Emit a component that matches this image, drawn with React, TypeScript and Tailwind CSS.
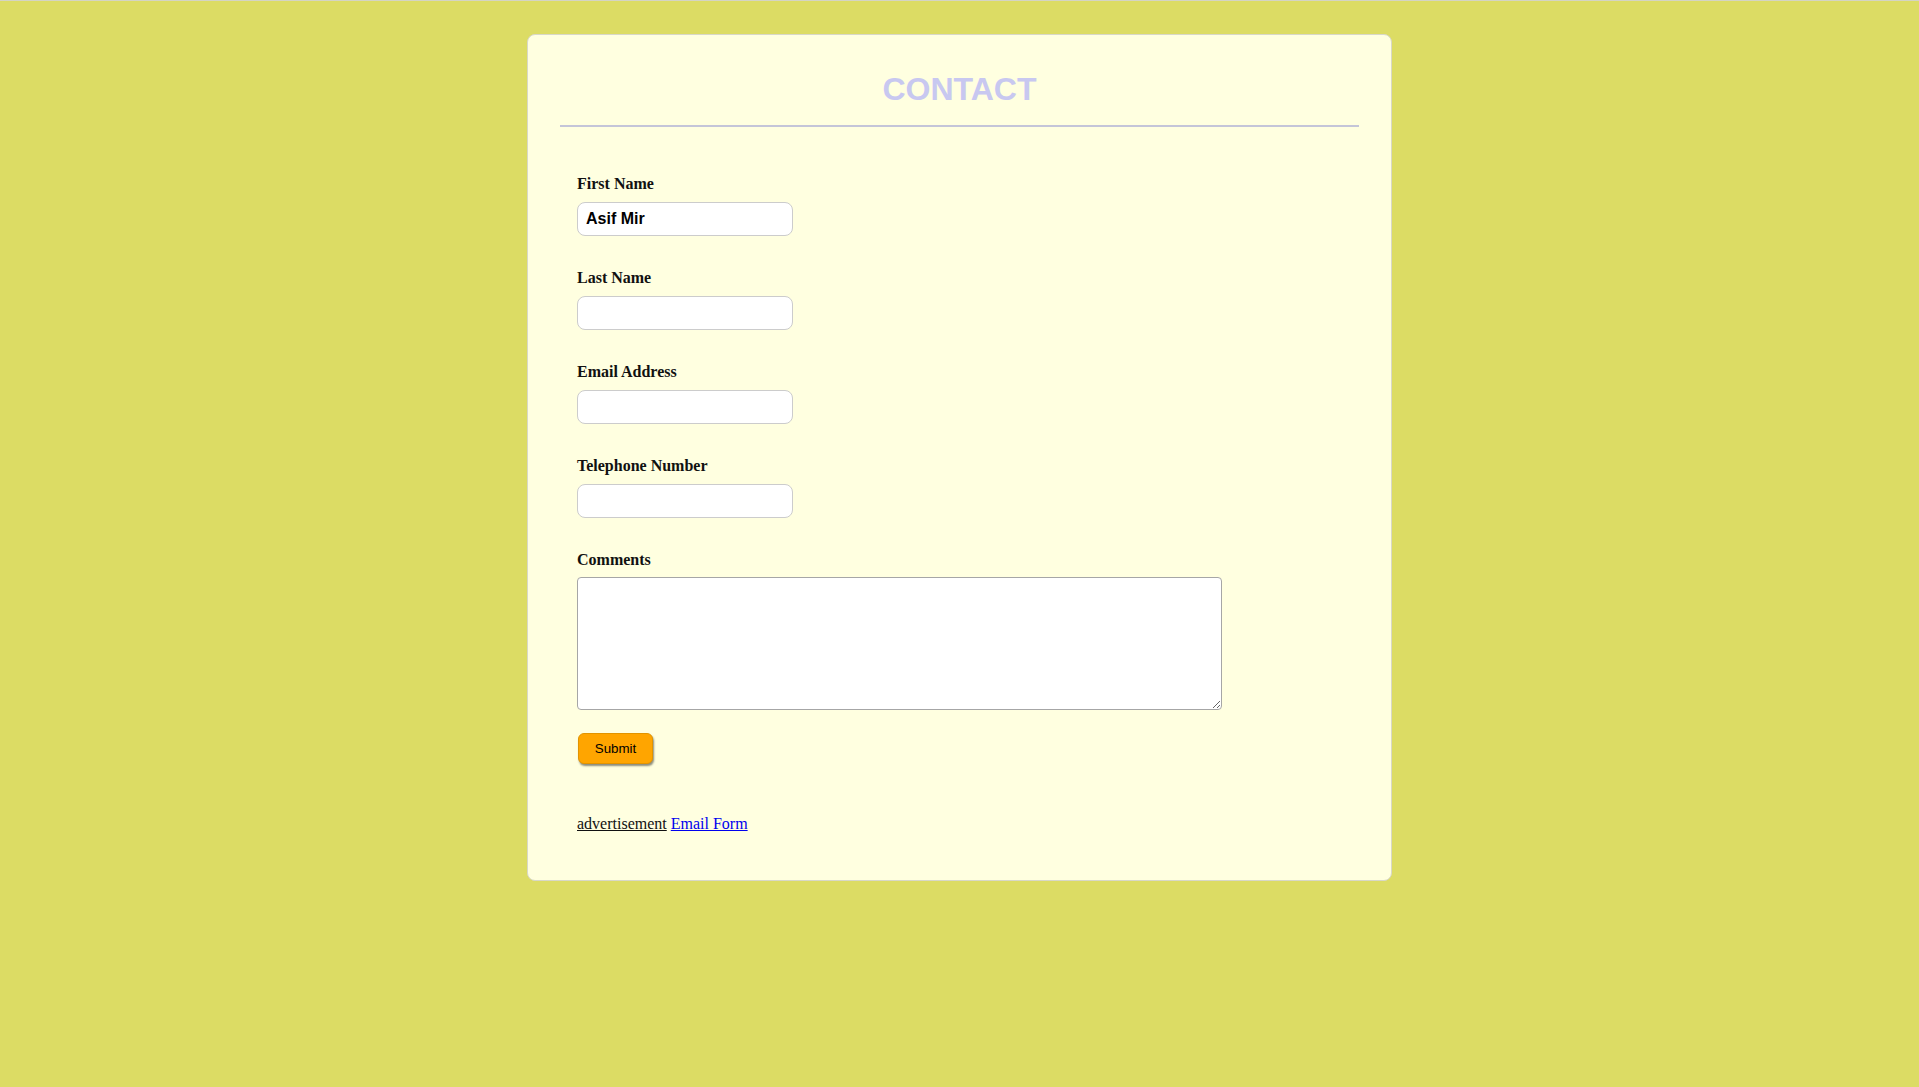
import { useState } from 'react'

const fields = [
  { id: 'firstName', label: 'First Name', value: 'Asif Mir' },
  { id: 'lastName', label: 'Last Name', value: '' },
  { id: 'email', label: 'Email Address', value: '' },
  { id: 'phone', label: 'Telephone Number', value: '' },
]

export default function App() {
  const [form, setForm] = useState<Record<string, string>>(
    Object.fromEntries(fields.map((f) => [f.id, f.value])),
  )
  const [comments, setComments] = useState('')

  return (
    <div className="min-h-screen border-t border-[#d4d4c4] bg-[#dcdc64] pt-[33px]">
      <div className="mx-auto w-[865px] rounded-[8px] border border-[#d8d8c8] bg-[#ffffe0] px-[32px] pt-[36px] pb-[47px]">
        <h1 className="text-center font-['Liberation_Sans',Arial,sans-serif] text-[32px] leading-[37px] font-bold text-[#c8c8f0]">
          CONTACT
        </h1>
        <div className="mt-[17px] h-[2px] bg-[#c4c5d8]" />

        <form
          className="mt-[48px] flex flex-col pl-[17px] font-['Liberation_Serif','Times_New_Roman',serif] text-[16px] leading-[18px] text-[#111]"
          onSubmit={(e) => e.preventDefault()}
        >
          {fields.map((f) => (
            <div key={f.id} className="mb-[33px] flex flex-col items-start">
              <label htmlFor={f.id} className="font-bold">
                {f.label}
              </label>
              <input
                id={f.id}
                type="text"
                value={form[f.id]}
                onChange={(e) => setForm({ ...form, [f.id]: e.target.value })}
                className="mt-[9px] h-[34px] w-[216px] rounded-[8px] border border-[#cccccc] bg-white px-[8px] font-['Liberation_Sans',Arial,sans-serif] text-[16px] font-bold text-black outline-none"
              />
            </div>
          ))}

          <div className="flex flex-col items-start">
            <label htmlFor="comments" className="font-bold">
              Comments
            </label>
            <textarea
              id="comments"
              value={comments}
              onChange={(e) => setComments(e.target.value)}
              className="mt-[8px] h-[133px] w-[645px] rounded-[4px] border border-[#a6a6a6] bg-white p-[2px] font-['Liberation_Mono',monospace] text-[13px] outline-none"
            />
          </div>

          <div>
            <button
              type="submit"
              className="mt-[23px] ml-px h-[31px] w-[75px] rounded-[6px] border border-[#e29400] bg-[#ffa500] font-['Liberation_Sans',Arial,sans-serif] text-[13.33px] text-black shadow-[1px_2px_2px_rgba(0,0,0,0.45)]"
            >
              Submit
            </button>
          </div>

          <p className="mt-[51px]">
            <a href="#" className="text-[#111] underline">
              advertisement
            </a>{' '}
            <a href="#" className="text-[#0000ee] underline">
              Email Form
            </a>
          </p>
        </form>
      </div>
    </div>
  )
}
